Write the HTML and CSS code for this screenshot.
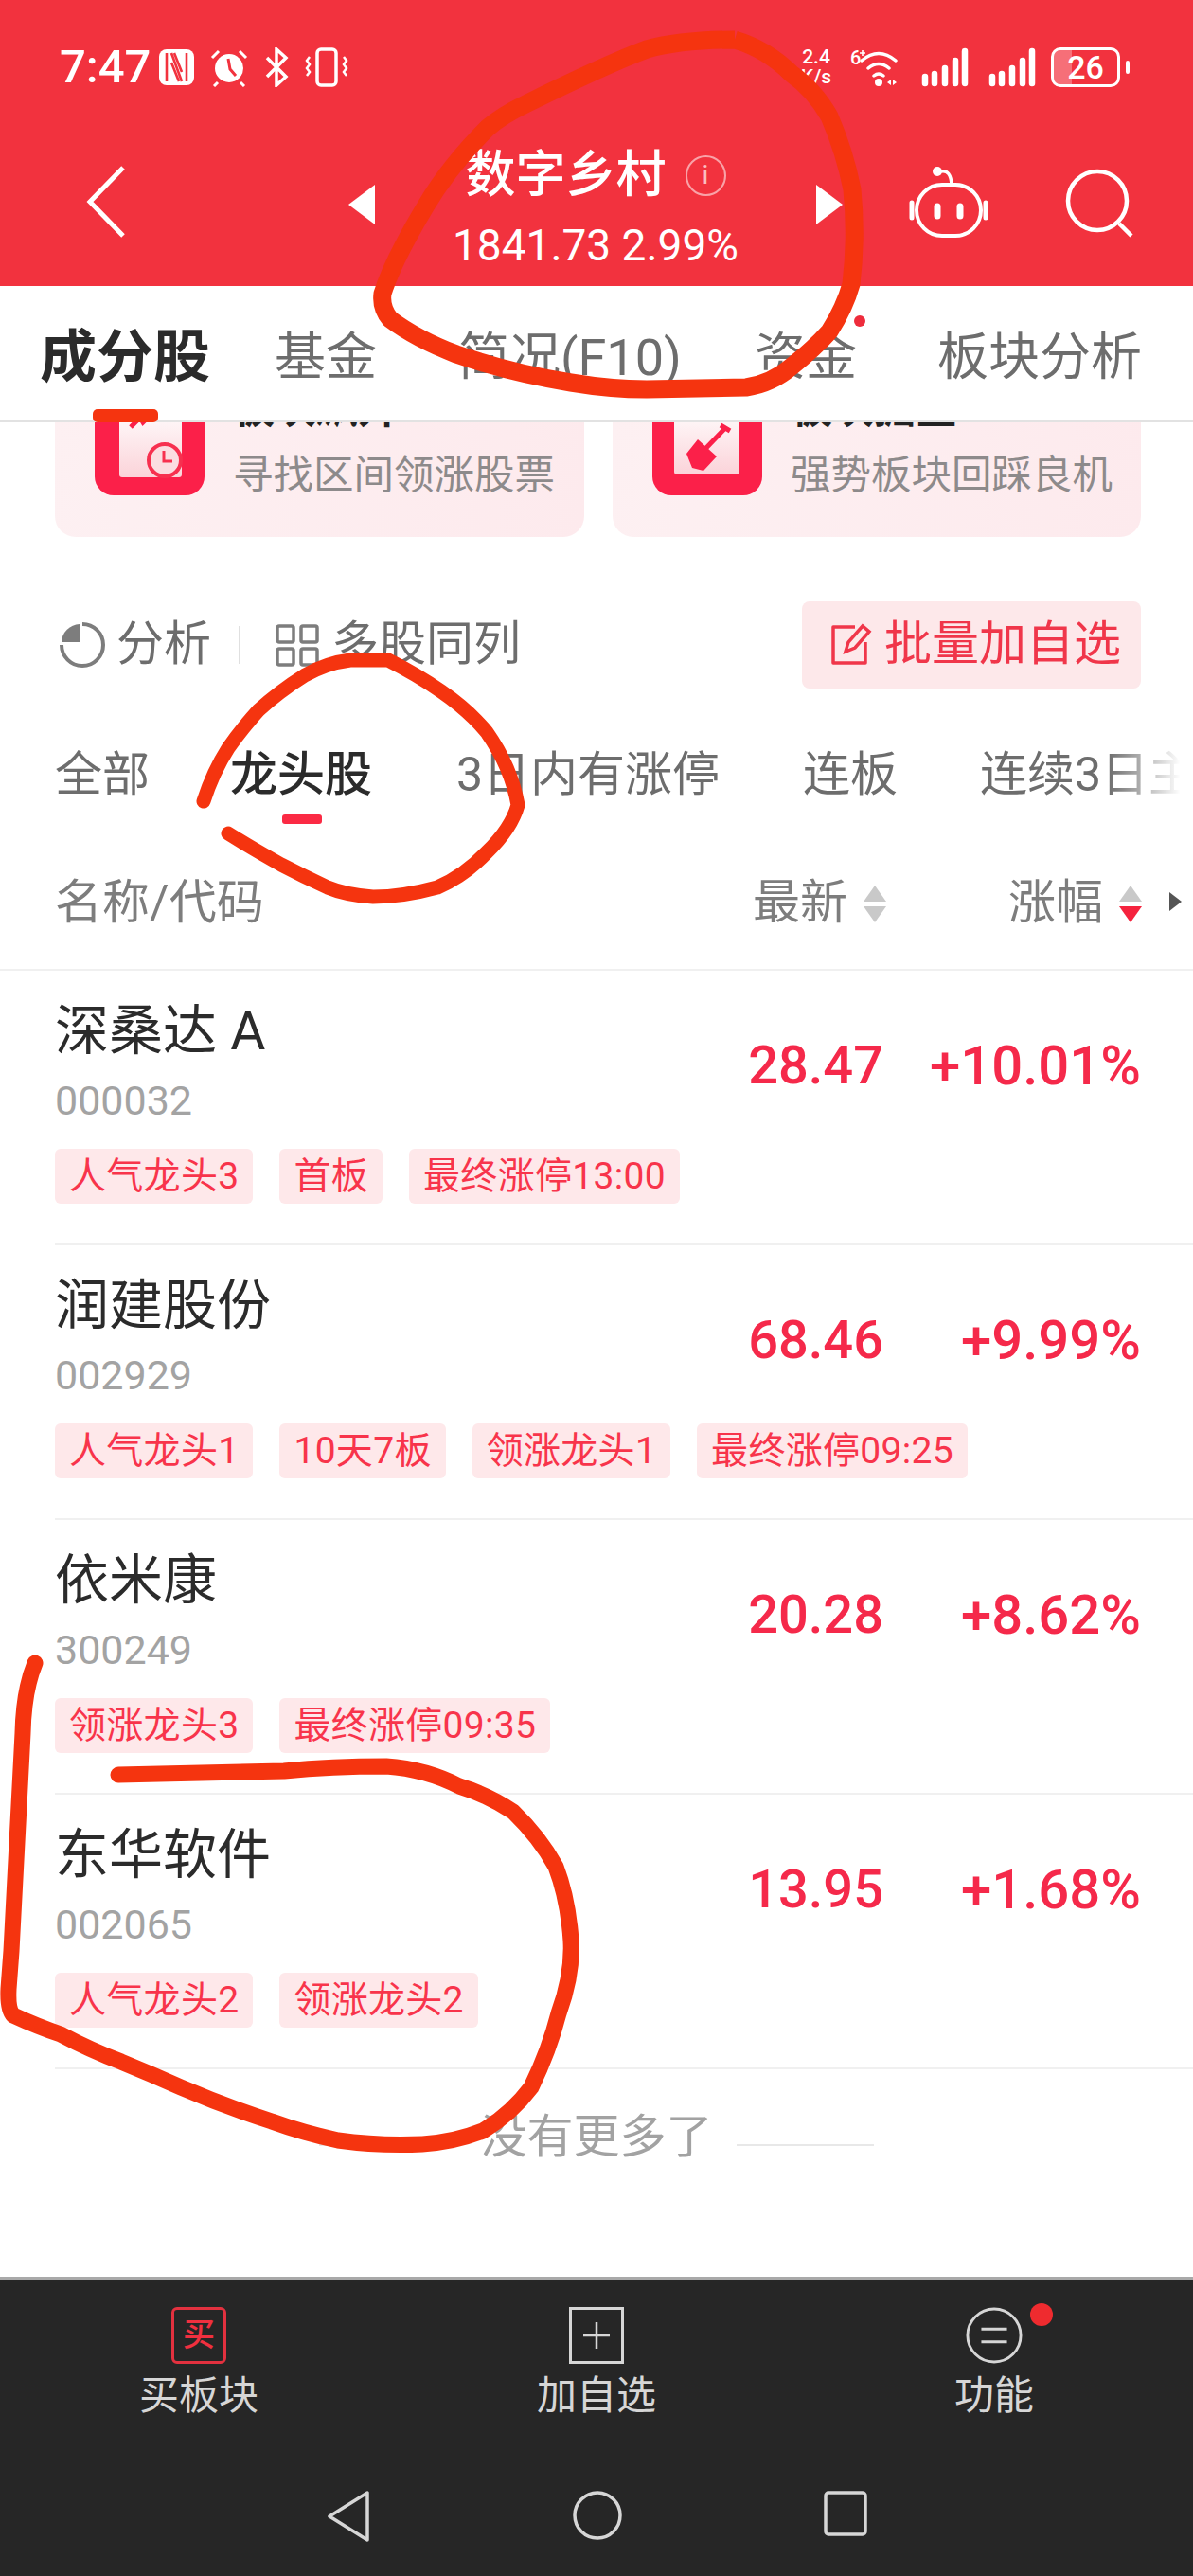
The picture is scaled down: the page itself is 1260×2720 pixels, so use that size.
FILE: index.html
```html
<!DOCTYPE html>
<html lang="zh-CN">
<head>
    <meta charset="UTF-8">
    <meta name="viewport" content="width=device-width, initial-scale=1.0">
    <title>数字乡村</title>
    <link rel="stylesheet" href="styles.css">
</head>
<body>
<div class="screen">
    <header class="top">
        <div class="status">
            <div class="status-left">
                <span class="clock">7:47</span>
                <svg class="ico" width="37" height="38" viewBox="0 0 37 38"><rect x="0" y="0" width="37" height="38" rx="8" fill="#fff"/><path d="M8 4v30M29 4v30M13 4l11 30M13 14l8 20M24 24l-8-20" fill="none" stroke="#f2323e" stroke-width="2.6"/></svg>
                <svg class="ico" width="42" height="42" viewBox="0 0 42 42"><circle cx="21" cy="22" r="15" fill="#fff"/><path d="M20 12l2 11 6 7" fill="none" stroke="#f2323e" stroke-width="3"/><path d="M3 11l7-7M39 11l-7-7M9 37l-4 4M33 37l4 4" stroke="#fff" stroke-width="3" fill="none"/></svg>
                <svg class="ico" width="26" height="42" viewBox="0 0 26 42"><path d="M3 11l20 20-10 9V2l10 9L3 31" fill="none" stroke="#fff" stroke-width="3.5"/></svg>
                <svg class="ico" width="48" height="42" viewBox="0 0 48 42"><rect x="14" y="2" width="20" height="38" rx="4" fill="none" stroke="#fff" stroke-width="3.5"/><path d="M6 10l-3 4 3 4-3 4 3 4-3 4M42 10l3 4-3 4 3 4-3 4 3 4" fill="none" stroke="#fff" stroke-width="2.5"/></svg>
            </div>
            <div class="status-right">
                <span class="speed">2.4<br>K/s</span>
                <svg width="56" height="42" viewBox="0 0 56 42"><text x="1" y="18" class="wifi-six">6</text><path d="M14 3v6M11 6h6" stroke="#fff" stroke-width="1.6"/><path d="M13 14q18-15 36 0M20 22q11-9 22 0M26 30q5-4 10 0" fill="none" stroke="#fff" stroke-width="3.5" stroke-linecap="round"/><circle cx="31" cy="37" r="4" fill="#fff"/><path d="M40 37l4-3v6zM50 37l-4-3v6z" fill="#fff"/></svg>
                <svg width="52" height="42" viewBox="0 0 52 42"><path d="M5 31v7M15 28v10M26 22v16M37 14v24M47 4v34" stroke="#fff" stroke-width="6.5" stroke-linecap="round"/></svg>
                <svg width="52" height="42" viewBox="0 0 52 42"><path d="M5 31v7M15 28v10M26 22v16M37 14v24M47 4v34" stroke="#fff" stroke-width="6.5" stroke-linecap="round"/></svg>
                <div class="battery"><span class="battery-fill"></span><span class="battery-num">26</span></div>
                <span class="battery-nub"></span>
            </div>
        </div>
        <div class="nav">
            <svg class="back" width="42" height="76" viewBox="0 0 42 76"><path d="M39 2L4 38l35 36" fill="none" stroke="#fff" stroke-width="5"/></svg>
            <span class="tri tri-left"></span>
            <div class="nav-title">
                <div class="title-line"><span class="title">数字乡村</span><span class="info">i</span></div>
                <div class="subtitle">1841.73 2.99%</div>
            </div>
            <span class="tri tri-right"></span>
            <svg class="robot" width="84" height="76" viewBox="0 0 84 76"><path d="M34 6q10-2 11 14" fill="none" stroke="#fff" stroke-width="3.5"/><circle cx="30" cy="6" r="5" fill="#fff"/><rect x="8" y="20" width="68" height="54" rx="27" fill="none" stroke="#fff" stroke-width="4"/><path d="M3 39v16M81 39v16" stroke="#fff" stroke-width="5" stroke-linecap="round"/><path d="M30 43v10M54 43v10" stroke="#fff" stroke-width="7" stroke-linecap="round"/></svg>
            <svg class="search" width="74" height="74" viewBox="0 0 74 74"><circle cx="34" cy="34" r="31" fill="none" stroke="#fff" stroke-width="4.5"/><path d="M57 58l13 13" stroke="#fff" stroke-width="4.5"/></svg>
        </div>
    </header>

    <nav class="main-tabs">
        <span class="main-tab active">成分股</span>
        <span class="main-tab">基金</span>
        <span class="main-tab">简况(F10)</span>
        <span class="main-tab dotted">资金</span>
        <span class="main-tab">板块分析</span>
    </nav>

    <section class="cards">
        <div class="card">
            <svg class="card-icon" width="116" height="116" viewBox="0 0 116 116"><defs><linearGradient id="pane" x1="0" y1="0" x2="0" y2="1"><stop offset="0" stop-color="#fff"/><stop offset="1" stop-color="#fbd3d9"/></linearGradient></defs><rect width="116" height="116" rx="20" fill="#fb2049"/><rect x="26" y="20" width="66" height="77" rx="3" fill="url(#pane)"/><path d="M38 44l10-10 3 5 12-12" fill="none" stroke="#fb2049" stroke-width="5"/><circle cx="74" cy="79" r="17" fill="#fbdde1" stroke="#f7304f" stroke-width="4"/><path d="M73 69v11h9" fill="none" stroke="#f7304f" stroke-width="3"/></svg>
            <div class="card-text"><div class="card-title">板块飙升</div><div class="card-desc">寻找区间领涨股票</div></div>
        </div>
        <div class="card">
            <svg class="card-icon" width="116" height="116" viewBox="0 0 116 116"><rect width="116" height="116" rx="20" fill="#fb2049"/><rect x="23" y="20" width="69" height="74" rx="3" fill="url(#pane)"/><path d="M78 44L55 68" stroke="#fb2049" stroke-width="5"/><path d="M72 42l10 6" stroke="#fb2049" stroke-width="5"/><path d="M48 57l20 18-14 15-12-3-6-15z" fill="#fb2049"/></svg>
            <div class="card-text"><div class="card-title">板块掘金</div><div class="card-desc">强势板块回踩良机</div></div>
        </div>
    </section>

    <section class="tools">
        <svg width="50" height="50" viewBox="0 0 50 50"><path d="M25 3a22 22 0 1 1-22 22" fill="none" stroke="#7d7d7d" stroke-width="4"/><path d="M22 3v19H3A20 20 0 0 1 22 3z" fill="#7d7d7d"/></svg>
        <span class="tool-text tool-first">分析</span>
        <span class="tool-sep"></span>
        <svg class="tool-grid" width="46" height="46" viewBox="0 0 46 46"><g fill="none" stroke="#7d7d7d" stroke-width="3.5"><rect x="2" y="3" width="17" height="17" rx="2"/><rect x="27" y="3" width="17" height="17" rx="2"/><rect x="2" y="27" width="17" height="17" rx="2"/><rect x="27" y="27" width="17" height="17" rx="2"/></g></svg>
        <span class="tool-text">多股同列</span>
        <button class="batch">
            <svg width="44" height="46" viewBox="0 0 44 46"><path d="M26 5H3v38h34V21" fill="none" stroke="#f0364a" stroke-width="3.5" stroke-linejoin="round"/><path d="M16 31l3-10L34 4l7 6-15 17z" fill="none" stroke="#f0364a" stroke-width="3.5"/></svg>
            <span class="batch-text">批量加自选</span>
        </button>
    </section>

    <section class="sub-tabs">
        <span class="sub-tab">全部</span>
        <span class="sub-tab active">龙头股</span>
        <span class="sub-tab">3日内有涨停</span>
        <span class="sub-tab">连板</span>
        <span class="sub-tab">连续3日主</span>
    </section>

    <section class="list-head">
        <span class="head-name">名称/代码</span>
        <span class="head-col head-latest">最新<span class="sort"><i class="up"></i><i class="down"></i></span></span>
        <span class="head-col head-rise">涨幅<span class="sort"><i class="up"></i><i class="down on"></i></span></span>
        <i class="more-arrow"></i>
    </section>

    <section class="rows">
        <div class="row">
            <div class="row-main">
                <div class="name">深桑达 A</div>
                <div class="code">000032</div>
                <div class="tags"><span class="tag">人气龙头3</span><span class="tag">首板</span><span class="tag">最终涨停13:00</span></div>
            </div>
            <div class="price">28.47</div>
            <div class="pct">+10.01%</div>
        </div>
        <div class="row">
            <div class="row-main">
                <div class="name">润建股份</div>
                <div class="code">002929</div>
                <div class="tags"><span class="tag">人气龙头1</span><span class="tag">10天7板</span><span class="tag">领涨龙头1</span><span class="tag">最终涨停09:25</span></div>
            </div>
            <div class="price">68.46</div>
            <div class="pct">+9.99%</div>
        </div>
        <div class="row">
            <div class="row-main">
                <div class="name">依米康</div>
                <div class="code">300249</div>
                <div class="tags"><span class="tag">领涨龙头3</span><span class="tag">最终涨停09:35</span></div>
            </div>
            <div class="price">20.28</div>
            <div class="pct">+8.62%</div>
        </div>
        <div class="row">
            <div class="row-main">
                <div class="name">东华软件</div>
                <div class="code">002065</div>
                <div class="tags"><span class="tag">人气龙头2</span><span class="tag">领涨龙头2</span></div>
            </div>
            <div class="price">13.95</div>
            <div class="pct">+1.68%</div>
        </div>
    </section>

    <div class="no-more"><span class="no-more-line"></span><span>没有更多了</span><span class="no-more-line"></span></div>

    <footer class="bottom">
        <div class="actions">
            <div class="action">
                <span class="buy-box">买</span>
                <span class="action-label">买板块</span>
            </div>
            <div class="action">
                <svg width="58" height="60" viewBox="0 0 58 60"><rect x="1.5" y="1.5" width="55" height="57" fill="none" stroke="#d6d6d6" stroke-width="3"/><path d="M29 16v28M15 30h28" stroke="#d6d6d6" stroke-width="2.5"/></svg>
                <span class="action-label">加自选</span>
            </div>
            <div class="action action-dot">
                <svg width="62" height="62" viewBox="0 0 62 62"><circle cx="31" cy="31" r="29" fill="none" stroke="#d6d6d6" stroke-width="3"/><path d="M17 24h28M17 38h28" stroke="#d6d6d6" stroke-width="3"/></svg>
                <span class="action-label">功能</span>
            </div>
        </div>
        <div class="sys-nav">
            <svg width="46" height="54" viewBox="0 0 46 54"><path d="M43 2v50L3 27z" fill="none" stroke="#d6d6d6" stroke-width="3.5" stroke-linejoin="round"/></svg>
            <svg width="52" height="52" viewBox="0 0 52 52"><circle cx="26" cy="26" r="24" fill="none" stroke="#d6d6d6" stroke-width="3.5"/></svg>
            <svg width="46" height="48" viewBox="0 0 46 48"><rect x="2" y="2" width="42" height="44" rx="3" fill="none" stroke="#d6d6d6" stroke-width="3.5"/></svg>
        </div>
    </footer>

    <!-- hand drawn marks on top of the screenshot -->
    <svg class="marks" width="1260" height="2720" viewBox="0 0 1260 2720">
        <path stroke-width="19" d="M776 42Q720 42 683 52Q640 68 555 110Q530 122 515 135Q475 175 450 217Q415 275 404 310Q402 325 412 337Q440 358 482 374Q540 394 603 404Q645 411 683 411L788 409Q815 405 836 387Q860 368 876 350Q892 325 899 300Q905 250 900 200Q892 160 876 123Q860 95 836 78Q810 52 776 42"/>
        <path stroke-width="15" stroke-linecap="round" d="M215 846Q225 815 241 790Q255 770 273 750Q295 730 322 713Q345 700 370 697L410 697Q440 712 466 730Q495 750 514 773Q540 810 547 850Q540 875 514 900Q490 925 462 937Q425 947 394 947Q365 945 346 937Q320 925 297 913Q265 895 241 880"/>
        <path stroke-width="17" stroke-linecap="round" d="M37 1756Q25 1785 24 1830L12 2060L9 2100Q8 2122 14 2128Q40 2140 64 2148Q96 2165 128 2177Q160 2190 191 2204Q240 2225 287 2240Q320 2252 357 2260Q400 2266 446 2264Q480 2262 510 2250Q540 2232 561 2204Q580 2165 590 2126Q605 2085 603 2049Q600 2005 587 1971Q570 1940 542 1913Q515 1895 485 1886Q450 1868 408 1865Q350 1865 300 1870L125 1874"/>
    </svg>
</div>
</body>
</html>
```
FILE: styles.css
```css
* { box-sizing: border-box; }
body { margin: 0; background: #fff; font-family: Roboto, "Noto Sans CJK SC", sans-serif; }
.screen { position: relative; width: 1260px; height: 2720px; overflow: hidden; display: flex; flex-direction: column; }

/* red header */
.top { height: 302px; background: #f2323e; color: #fff; }
.status { height: 140px; padding: 50px 67px 0 63px; display: flex; justify-content: space-between; }
.status-left { display: flex; align-items: center; height: 42px; }
.clock { font-size: 49px; font-weight: 500; line-height: 42px; width: 105px; }
.ico { margin-right: 16px; }
.status-right { display: flex; align-items: center; height: 42px; gap: 19px; position: relative; }
.speed { font-size: 21px; line-height: 21px; text-align: center; width: 40px; margin-right: -4px; font-weight: 500; }
.wifi-six { font-size: 20px; fill: #fff; font-weight: 500; }
.battery { position: relative; width: 73px; height: 42px; border: 3px solid #fff; border-radius: 10px; margin-left: -4px; overflow: hidden; text-align: center; }
.battery-fill { position: absolute; left: 0; top: 0; bottom: 0; width: 19px; background: rgba(255,255,255,.3); }
.battery-num { position: relative; font-size: 34px; line-height: 36px; font-weight: 500; }
.battery-nub { width: 4px; height: 14px; background: #fff; border-radius: 2px; margin-left: -13px; }
.nav { height: 162px; position: relative; display: flex; align-items: flex-start; }
.back { margin: 35px 0 0 91px; }
.tri { width: 0; height: 0; border-top: 21px solid transparent; border-bottom: 21px solid transparent; margin-top: 55px; }
.tri-left { border-right: 28px solid #fff; margin-left: 235px; }
.tri-right { border-left: 28px solid #fff; }
.nav-title { width: 466px; padding-top: 14px; text-align: center; }
.title-line { display: flex; align-items: center; justify-content: center; height: 60px; padding-top: 2px; }
.title { font-size: 53px; font-weight: 500; line-height: 60px; }
.info { width: 43px; height: 43px; margin-left: 20px; border: 2px solid rgba(255,255,255,.55); border-radius: 50%; font-size: 28px; line-height: 38px; color: rgba(255,255,255,.7); }
.subtitle { font-size: 46px; line-height: 54px; margin-top: 18px; }
.robot { margin: 35px 0 0 70px; }
.search { margin: 38px 0 0 81px; }

/* main tabs */
.main-tabs { position: relative; z-index: 1; height: 144px; background: #fff; border-bottom: 2px solid #e2e2e2; padding: 41px 0 0 42px; display: grid; grid-template-columns: 248px 194px 313px 193px auto; font-size: 54px; line-height: 70px; color: #6d6d6d; }
.main-tab { position: relative; height: 70px; white-space: nowrap; }
.main-tab.active { font-size: 60px; font-weight: 700; color: #2b2b2b; }
.main-tab.active::after { content: ""; position: absolute; left: 56px; top: 89px; width: 69px; height: 14px; border-radius: 5px; background: #f5340f; }
.main-tab.dotted::after { content: ""; position: absolute; left: 105px; top: -10px; width: 12px; height: 12px; border-radius: 50%; background: #ee2c3c; }

/* cropped entry cards, the page is scrolled a bit */
.cards { height: 121px; overflow: hidden; padding: 0 55px 0 58px; display: grid; grid-template-columns: 559px 558px; gap: 30px; }
.card { height: 150px; margin-top: -29px; padding: 0 0 0 42px; display: flex; gap: 30px; align-items: flex-start; border-radius: 0 0 22px 22px; background: linear-gradient(100deg, #fdf0f2, #fdeaed); }
.card-icon { margin-top: -10px; flex: none; }
.card-text { margin-top: -10px; }
.card-title { font-size: 44px; line-height: 50px; font-weight: 700; color: #222; }
.card-desc { font-size: 42.5px; line-height: 50px; margin-top: 20px; color: #8d8a8b; white-space: nowrap; }

/* tools */
.tools { height: 160px; padding: 68px 55px 0 62px; display: flex; align-items: flex-start; }
.tools svg { flex: none; margin-top: 21px; }
.tool-text { font-size: 50px; line-height: 90px; color: #6d6d6d; }
.tool-first { margin-left: 11px; }
.tool-sep { width: 2px; height: 40px; background: #e0e0e0; margin: 26px 0 0 29px; }
.tools .tool-grid { margin: 23px 13px 0 37px; }
.batch { margin-left: auto; width: 358px; height: 92px; border: 0; border-radius: 8px; background: #fde8ea; color: #f0364a; font: inherit; font-size: 50px; display: flex; align-items: center; padding: 0 0 0 30px; gap: 13px; }
.tools .batch svg { margin-top: -3px; }
.batch-text { line-height: 50px; margin-top: -3px; }

/* sub tabs */
.sub-tabs { position: relative; height: 163px; padding: 61px 0 0 58px; display: grid; grid-template-columns: 185px 239px 366px 187px 225px; overflow: hidden; font-size: 50px; line-height: 60px; color: #6d6d6d; }
.sub-tab { position: relative; height: 60px; white-space: nowrap; }
.sub-tab.active { color: #2b2b2b; font-weight: 500; font-size: 50px; }
.sub-tab.active::after { content: ""; position: absolute; left: 55px; top: 72px; width: 42px; height: 10px; border-radius: 3px; background: #fb2a44; }
.sub-tabs::after { content: ""; position: absolute; right: 0; top: 50px; width: 90px; height: 70px; background: linear-gradient(90deg, rgba(255,255,255,0), #fff 85%); }

/* list */
.list-head { position: relative; height: 135px; padding-top: 33px; border-bottom: 2px solid #f0f0f0; font-size: 50px; line-height: 60px; color: #7d7d7d; }
.head-name { position: absolute; left: 58px; }
.head-col { position: absolute; display: flex; }
.head-latest { left: 795px; }
.head-rise { left: 1065px; }
.sort { display: flex; flex-direction: column; gap: 5px; margin: 12px 0 0 17px; }
.sort i { width: 0; height: 0; border-left: 12px solid transparent; border-right: 12px solid transparent; }
.sort .up { border-bottom: 17px solid #c9c9c9; }
.sort .down { border-top: 17px solid #c9c9c9; }
.sort .down.on { border-top-color: #f5233e; }
.more-arrow { position: absolute; left: 1235px; top: 52px; width: 0; height: 0; border-top: 10px solid transparent; border-bottom: 10px solid transparent; border-left: 13px solid #555; }

.row { height: 290px; margin-left: 58px; padding: 29px 55px 0 0; border-bottom: 2px solid #f0f0f0; display: flex; align-items: flex-start; }
.row-main { flex: 1; min-width: 0; }
.name { font-size: 57px; line-height: 70px; color: #2b2b2b; }
.code { font-size: 43px; line-height: 50px; margin-top: 13px; color: #a3a3a3; }
.tags { display: flex; gap: 28px; margin-top: 26px; }
.tag { height: 58px; padding: 0 15px; border-radius: 6px; background: #fee8ea; color: #f8344b; font-size: 39px; line-height: 58px; letter-spacing: .3px; white-space: nowrap; }
.price, .pct { margin-top: 36px; font-size: 56px; line-height: 70px; font-weight: 500; color: #f5294a; text-align: right; }
.price { width: 200px; }
.pct { width: 272px; font-size: 58px; }

.no-more { display: flex; justify-content: center; gap: 25px; padding-top: 42px; font-size: 49px; line-height: 60px; color: #a2a2a2; }
.no-more-line { width: 145px; height: 2px; margin-top: 37px; background: #e8e8e8; }

/* dark bottom */
.bottom { position: absolute; left: 0; right: 0; bottom: 0; height: 316px; background: #262626; border-top: 3px solid #a9a9a9; color: #d6d6d6; }
.actions { display: grid; grid-template-columns: repeat(3, 420px); height: 190px; padding-top: 29px; }
.action { position: relative; display: flex; flex-direction: column; align-items: center; }
.action svg, .buy-box { height: 60px; flex: none; }
.action-label { font-size: 42px; line-height: 50px; margin-top: 9px; }
.buy-box { width: 58px; height: 60px; border: 3px solid #e3313f; border-radius: 6px; color: #f0303f; font-size: 34px; line-height: 52px; text-align: center; font-weight: 500; }
.action-dot::after { content: ""; position: absolute; left: 248px; top: -4px; width: 24px; height: 24px; border-radius: 50%; background: #ef2b2f; }
.sys-nav { height: 123px; padding: 33px 0 0 345px; display: grid; grid-template-columns: 260px 265px auto; justify-items: start; }
.marks { position: absolute; left: 0; top: 0; z-index: 2; pointer-events: none; }
.marks path { fill: none; stroke: #f5340f; stroke-linejoin: round; }
```
